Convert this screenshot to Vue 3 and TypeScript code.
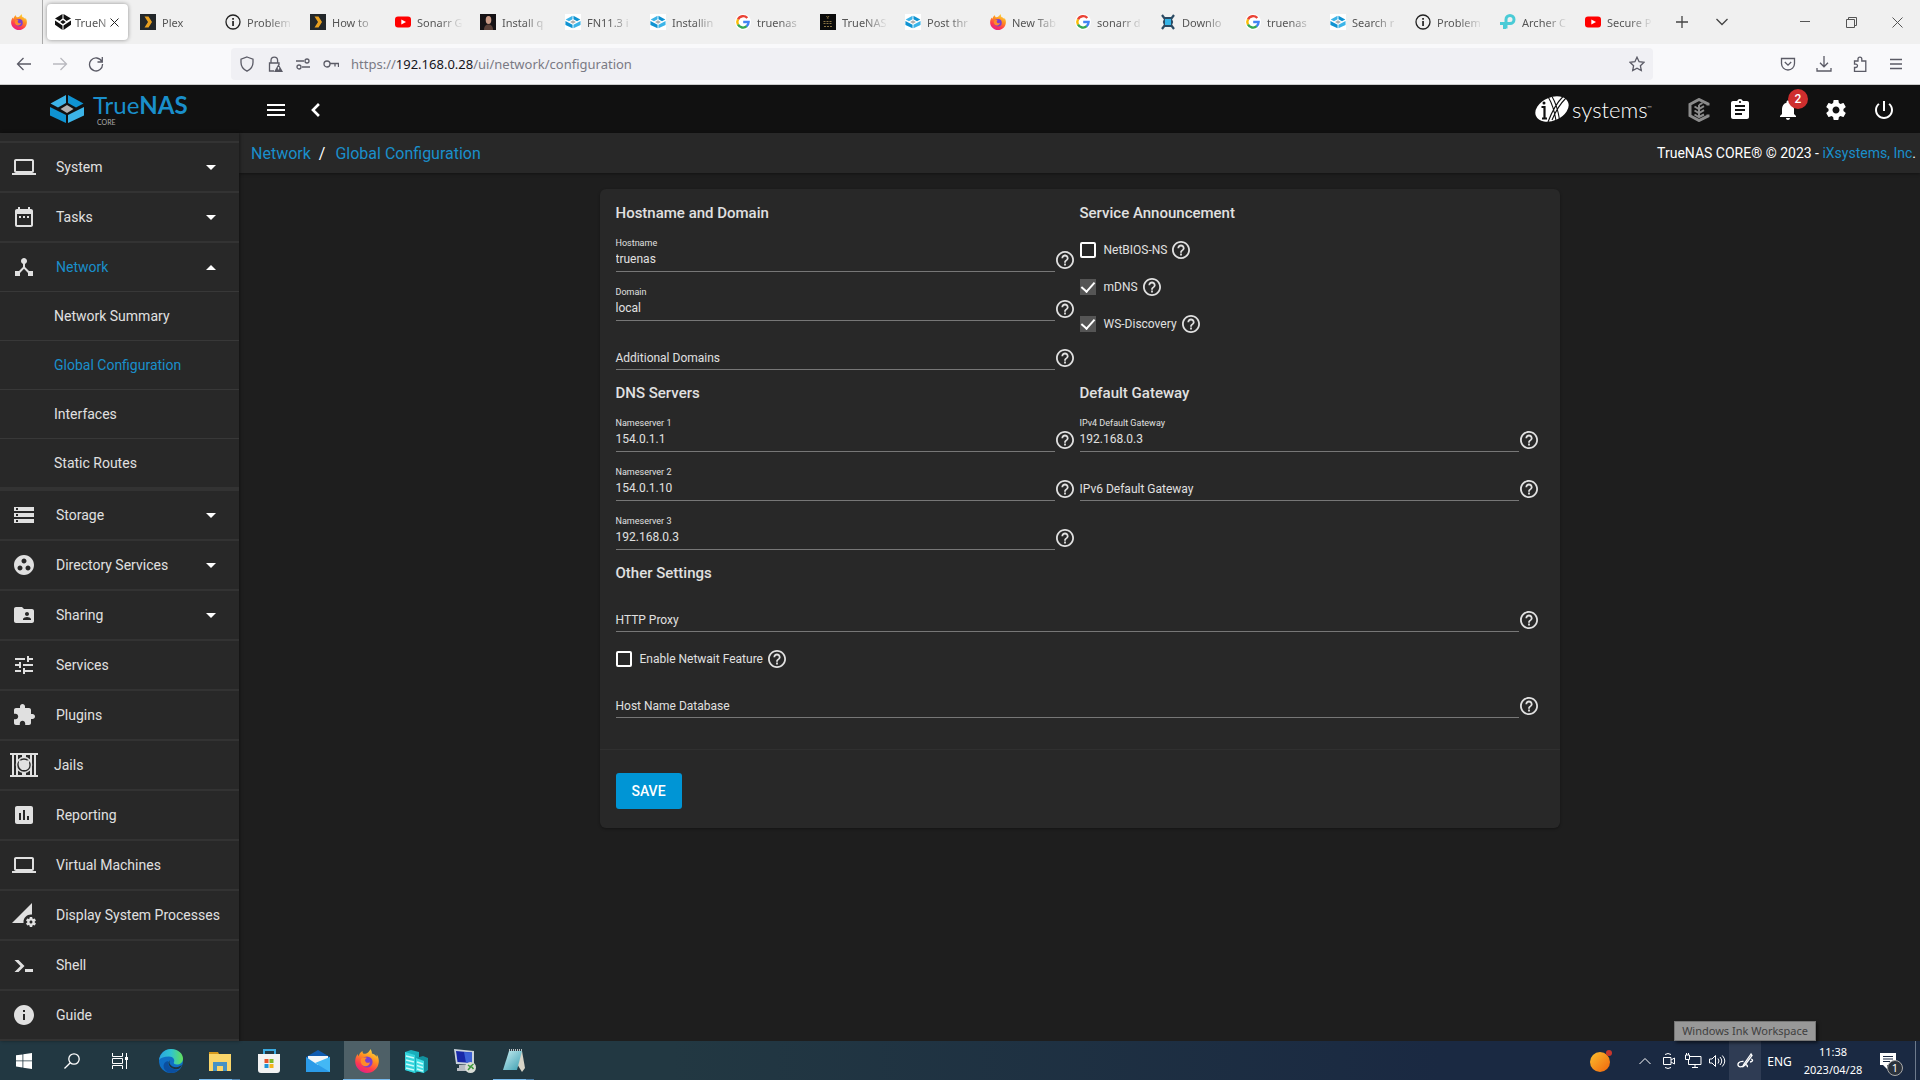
<script setup lang="ts">
import { ref } from 'vue'

interface Tab { title: string; icon: string; active?: boolean }
const tabs: Tab[] = [
  { title: 'TrueN', icon: 'core', active: true },
  { title: 'Plex', icon: 'plex' },
  { title: 'Problem', icon: 'info' },
  { title: 'How to', icon: 'plex' },
  { title: 'Sonarr G', icon: 'youtube' },
  { title: 'Install q', icon: 'person' },
  { title: 'FN11.3 i', icon: 'truenas' },
  { title: 'Installin', icon: 'truenas' },
  { title: 'truenas', icon: 'google' },
  { title: 'TrueNAS', icon: 'dark' },
  { title: 'Post thr', icon: 'truenas' },
  { title: 'New Tab', icon: 'firefox' },
  { title: 'sonarr d', icon: 'google' },
  { title: 'Downlo', icon: 'sonarr' },
  { title: 'truenas', icon: 'google' },
  { title: 'Search r', icon: 'truenas' },
  { title: 'Problem', icon: 'info' },
  { title: 'Archer C', icon: 'tplink' },
  { title: 'Secure P', icon: 'youtube' },
]

const paths: Record<string, string> = {
  laptop: 'M20 18c1.1 0 1.99-.9 1.99-2L22 6c0-1.1-.9-2-2-2H4c-1.1 0-2 .9-2 2v10c0 1.1.9 2 2 2H0v2h24v-2h-4zM4 6h16v10H4V6z',
  calendar: 'M9 11H7v2h2v-2zm4 0h-2v2h2v-2zm4 0h-2v2h2v-2zm2-7h-1V2h-2v2H8V2H6v2H5c-1.11 0-1.99.9-1.99 2L3 20c0 1.1.89 2 2 2h14c1.1 0 2-.9 2-2V6c0-1.1-.9-2-2-2zm0 16H5V9h14v11z',
  hub: 'M17 16l-4-4V8.82C14.16 8.4 15 7.3 15 6c0-1.66-1.34-3-3-3S9 4.34 9 6c0 1.3.84 2.4 2 2.82V12l-4 4H3v5h5v-3.05l4-4.2 4 4.2V21h5v-5h-4z',
  storage: 'M2 20h20v-4H2v4zm2-3h2v2H4v-2zM2 4v4h20V4H2zm4 3H4V5h2v2zm-4 7h20v-4H2v4zm2-3h2v2H4v-2z',
  group: 'M12 2C6.48 2 2 6.48 2 12s4.48 10 10 10 10-4.48 10-10S17.52 2 12 2zM8 17.5c-1.38 0-2.5-1.12-2.5-2.5s1.12-2.5 2.5-2.5 2.5 1.12 2.5 2.5-1.12 2.5-2.5 2.5zM9.5 8c0-1.38 1.12-2.5 2.5-2.5s2.5 1.12 2.5 2.5-1.12 2.5-2.5 2.5S9.5 9.38 9.5 8zm6.5 9.5c-1.38 0-2.5-1.12-2.5-2.5s1.12-2.5 2.5-2.5 2.5 1.12 2.5 2.5-1.12 2.5-2.5 2.5z',
  folder: 'M20 6h-8l-2-2H4c-1.1 0-1.99.9-1.99 2L2 18c0 1.1.9 2 2 2h16c1.1 0 2-.9 2-2V8c0-1.1-.9-2-2-2zm-5 3c1.1 0 2 .9 2 2s-.9 2-2 2-2-.9-2-2 .9-2 2-2zm4 8h-8v-1c0-1.33 2.67-2 4-2s4 .67 4 2v1z',
  tune: 'M3 17v2h6v-2H3zM3 5v2h10V5H3zm10 16v-2h8v-2h-8v-2h-2v6h2zM7 9v2H3v2h4v2h2V9H7zm14 4v-2H11v2h10zm-6-4h2V7h4V5h-4V3h-2v6z',
  plugin: 'M20.5 11H19V7c0-1.1-.9-2-2-2h-4V3.5C13 2.12 11.88 1 10.5 1S8 2.12 8 3.5V5H4c-1.1 0-1.99.9-1.99 2v3.8H3.5c1.49 0 2.7 1.21 2.7 2.7s-1.21 2.7-2.7 2.7H2V20c0 1.1.9 2 2 2h3.8v-1.5c0-1.49 1.21-2.7 2.7-2.7 1.49 0 2.7 1.21 2.7 2.7V22H17c1.1 0 2-.9 2-2v-4h1.5c1.38 0 2.5-1.12 2.5-2.5S21.88 11 20.5 11z',
  report: 'M19 3H5c-1.1 0-2 .9-2 2v14c0 1.1.9 2 2 2h14c1.1 0 2-.9 2-2V5c0-1.1-.9-2-2-2zM9 17H7v-7h2v7zm4 0h-2V7h2v10zm4 0h-2v-4h2v4z',
  process: 'M18.99 11.5c.34 0 .67.03 1 .07L20 0 0 20h11.56c-.04-.33-.07-.66-.07-1 0-4.14 3.36-7.5 7.5-7.5zm3.71 7.99c.02-.16.04-.32.04-.49 0-.17-.01-.33-.04-.49l1.06-.83c.09-.08.12-.21.06-.32l-1-1.73c-.06-.11-.19-.15-.31-.11l-1.24.5c-.26-.2-.54-.37-.85-.49l-.19-1.32c-.01-.12-.12-.21-.24-.21h-2c-.12 0-.23.09-.25.21l-.19 1.32c-.3.13-.59.29-.85.49l-1.24-.5c-.11-.04-.24 0-.31.11l-1 1.73c-.06.11-.04.24.06.32l1.06.83c-.02.16-.03.32-.03.49 0 .17.01.33.03.49l-1.06.83c-.09.08-.12.21-.06.32l1 1.73c.06.11.19.15.31.11l1.24-.5c.26.2.54.37.85.49l.19 1.32c.02.12.12.21.25.21h2c.12 0 .23-.09.25-.21l.19-1.32c.3-.13.59-.29.84-.49l1.25.5c.11.04.24 0 .31-.11l1-1.73c.06-.11.03-.24-.06-.32l-1.07-.83zm-3.71 1.01c-.83 0-1.5-.67-1.5-1.5s.67-1.5 1.5-1.5 1.5.67 1.5 1.5-.67 1.5-1.5 1.5z',
  shell: 'M2.5 7h4l6 6-6 6h-4l6-6zM13 16h8v3h-8z',
  guide: 'M12 2C6.48 2 2 6.48 2 12s4.48 10 10 10 10-4.48 10-10S17.52 2 12 2zm1 15h-2v-6h2v6zm0-8h-2V7h2v2z',
  menu: 'M3 18h18v-2H3v2zm0-5h18v-2H3v2zm0-7v2h18V6H3z',
  back: 'M15.9 17L10.9 12l5-5L14 5.1 7.1 12l6.9 6.9z',
  clipboard: 'M19 3h-4.18C14.4 1.84 13.3 1 12 1c-1.3 0-2.4.84-2.82 2H5c-1.1 0-2 .9-2 2v14c0 1.1.9 2 2 2h14c1.1 0 2-.9 2-2V5c0-1.1-.9-2-2-2zm-7 0c.55 0 1 .45 1 1s-.45 1-1 1-1-.45-1-1 .45-1 1-1zm2 14H7v-2h7v2zm3-4H7v-2h10v2zm0-4H7V7h10v2z',
  bell: 'M12 22c1.1 0 2-.9 2-2h-4c0 1.1.89 2 2 2zm6-6v-5c0-3.07-1.64-5.64-4.5-6.32V4c0-.83-.67-1.5-1.5-1.5s-1.5.67-1.5 1.5v.68C7.63 5.36 6 7.92 6 11v5l-2 2v1h16v-1l-2-2z',
  gear: 'M19.43 12.98c.04-.32.07-.64.07-.98s-.03-.66-.07-.98l2.11-1.65c.19-.15.24-.42.12-.64l-2-3.46c-.12-.22-.39-.3-.61-.22l-2.49 1c-.52-.4-1.08-.73-1.69-.98l-.38-2.65C14.46 2.18 14.25 2 14 2h-4c-.25 0-.46.18-.49.42l-.38 2.65c-.61.25-1.17.59-1.69.98l-2.49-1c-.23-.09-.49 0-.61.22l-2 3.46c-.13.22-.07.49.12.64l2.11 1.65c-.04.32-.07.65-.07.98s.03.66.07.98l-2.11 1.65c-.19.15-.24.42-.12.64l2 3.46c.12.22.39.3.61.22l2.49-1c.52.4 1.08.73 1.69.98l.38 2.65c.03.24.24.42.49.42h4c.25 0 .46-.18.49-.42l.38-2.65c.61-.25 1.17-.59 1.69-.98l2.49 1c.23.09.49 0 .61-.22l2-3.46c.12-.22.07-.49-.12-.64l-2.11-1.65zM12 15.5c-1.93 0-3.5-1.57-3.5-3.5s1.57-3.5 3.5-3.5 3.5 1.57 3.5 3.5-1.57 3.5-3.5 3.5z',
  power: 'M13 3h-2v10h2V3zm4.83 2.17l-1.42 1.42C17.99 7.86 19 9.81 19 12c0 3.87-3.13 7-7 7s-7-3.13-7-7c0-2.19 1.01-4.14 2.58-5.42L6.17 5.17C4.23 6.82 3 9.26 3 12c0 4.97 4.03 9 9 9s9-4.03 9-9c0-2.74-1.23-5.18-3.17-6.83z',
  help: 'M11 18h2v-2h-2v2zm1-16C6.48 2 2 6.48 2 12s4.48 10 10 10 10-4.48 10-10S17.52 2 12 2zm0 18c-4.41 0-8-3.59-8-8s3.59-8 8-8 8 3.59 8 8-3.59 8-8 8zm0-14c-2.21 0-4 1.79-4 4h2c0-1.1.9-2 2-2s2 .9 2 2c0 2-3 1.75-3 5h2c0-2.25 3-2.5 3-5 0-2.21-1.79-4-4-4z',
}

interface NavItem { label: string; icon: string; expandable?: boolean; open?: boolean; children?: string[] }
const nav: NavItem[] = [
  { label: 'System', icon: 'laptop', expandable: true },
  { label: 'Tasks', icon: 'calendar', expandable: true },
  { label: 'Network', icon: 'hub', expandable: true, open: true, children: ['Network Summary', 'Global Configuration', 'Interfaces', 'Static Routes'] },
  { label: 'Storage', icon: 'storage', expandable: true },
  { label: 'Directory Services', icon: 'group', expandable: true },
  { label: 'Sharing', icon: 'folder', expandable: true },
  { label: 'Services', icon: 'tune' },
  { label: 'Plugins', icon: 'plugin' },
  { label: 'Jails', icon: 'jail' },
  { label: 'Reporting', icon: 'report' },
  { label: 'Virtual Machines', icon: 'laptop' },
  { label: 'Display System Processes', icon: 'process' },
  { label: 'Shell', icon: 'shell' },
  { label: 'Guide', icon: 'guide' },
]
const activeChild = 'Global Configuration'

interface Field { id: string; label: string; value: string }
interface Check { id: string; label: string; checked: boolean }
interface Section { title: string; wide?: boolean; fields: Field[]; checks: Check[]; after?: Field[] }
const sections = ref<Section[]>([
  { title: 'Hostname and Domain', checks: [], fields: [
    { id: 'hostname', label: 'Hostname', value: 'truenas' },
    { id: 'domain', label: 'Domain', value: 'local' },
    { id: 'domains', label: 'Additional Domains', value: '' },
  ] },
  { title: 'Service Announcement', fields: [], checks: [
    { id: 'netbios', label: 'NetBIOS-NS', checked: false },
    { id: 'mdns', label: 'mDNS', checked: true },
    { id: 'wsd', label: 'WS-Discovery', checked: true },
  ] },
  { title: 'DNS Servers', checks: [], fields: [
    { id: 'ns1', label: 'Nameserver 1', value: '154.0.1.1' },
    { id: 'ns2', label: 'Nameserver 2', value: '154.0.1.10' },
    { id: 'ns3', label: 'Nameserver 3', value: '192.168.0.3' },
  ] },
  { title: 'Default Gateway', checks: [], fields: [
    { id: 'ipv4', label: 'IPv4 Default Gateway', value: '192.168.0.3' },
    { id: 'ipv6', label: 'IPv6 Default Gateway', value: '' },
  ] },
  { title: 'Other Settings', wide: true,
    fields: [{ id: 'proxy', label: 'HTTP Proxy', value: '' }],
    checks: [{ id: 'netwait', label: 'Enable Netwait Feature', checked: false }],
    after: [{ id: 'hosts', label: 'Host Name Database', value: '' }] },
])
</script>

<template>
  <div class="screen">
    <!-- shared drawings -->
    <svg class="defs" aria-hidden="true">
      <defs>
        <linearGradient id="gFox" x1="0.8" y1="0" x2="0.3" y2="1">
          <stop offset="0" stop-color="#ffe040" /><stop offset=".4" stop-color="#ff9020" /><stop offset=".75" stop-color="#ff3850" /><stop offset="1" stop-color="#e0218a" />
        </linearGradient>
        <linearGradient id="gEdge" x1="0" y1="0" x2="1" y2="0">
          <stop offset="0" stop-color="#2aa5e0" /><stop offset=".5" stop-color="#30c4d0" /><stop offset="1" stop-color="#62e05a" />
        </linearGradient>
        <linearGradient id="gSun" x1="0" y1="0" x2="1" y2="1">
          <stop offset="0" stop-color="#fcc02e" /><stop offset="1" stop-color="#f0640c" />
        </linearGradient>
        <linearGradient id="gNote" x1="0" y1="0" x2="1" y2="1">
          <stop offset="0" stop-color="#c8eef2" /><stop offset="1" stop-color="#3a9db0" />
        </linearGradient>
      </defs>
      <symbol id="s-firefox" viewBox="0 0 24 24">
        <path fill="url(#gFox)" d="M15.500 0c1 1.500 1.500 3 1.400 4.500 2.300.5 4 2 4.700 3.300.3-.9.200-1.700 0-2.500C23.200 7.500 24 10.200 23.800 13 23.300 19.300 18.200 24 12 24S.2 18.800.2 12.600c0-3 .9-5.700 2.600-7.500.1 1 .4 1.600.9 2.200C4 5 5.500 3 7.500 2c-.1 1 .2 2 1 2.700 2 .200 3.200-.2 4.500-1.300C14 2.500 15 1.300 15.500 0z" />
        <circle cx="12" cy="13" r="5.600" fill="#7a3fd0" />
        <path d="M6 10c1.500-1.500 4-1.800 6-1-1.500.6-2.200 1.500-1.800 3 .6 2 3.300 2.300 4.800 1.200-.4 3-3 4.600-5.500 4C6.500 16.500 5 13 6 10z" fill="#ff8a2a" />
      </symbol>
      <symbol id="s-truenas" viewBox="0 0 36 28">
        <path fill="#0f93d2" d="M1 12v8.500L17 28v-8z" />
        <path fill="#3cb4e8" d="M17 0v8L9 12.500 1.500 8.500zM35 12v8.500L19 28v-8z" />
        <path fill="#0f93d2" d="M19 0l15.500 8.500L27 12.500 19 8z" />
        <path fill="#b0b0b0" d="M18 10l6.500 4-6.500 4-6.500-4z" />
      </symbol>
      <symbol id="s-core" viewBox="0 0 16 16">
        <path d="M7.500 0v4.500L4.500 7 0 4.500zM8.500 0v4.500l3 2.500L16 4.500zM0 6.500l7.500 5V16L0 10.800zM16 6.500l-7.500 5V16l7.500-5.200zM8 6l2.800 2L8 10 5.200 8z" fill="#111" />
      </symbol>
      <symbol id="s-plex" viewBox="0 0 16 16"><path fill="#23272a" d="M0 0h16v16H0z" /><path fill="#e8a020" d="M4.500 2.500h4L12 8l-3.500 5.500h-4L8 8z" /></symbol>
      <symbol id="s-info" viewBox="0 0 16 16"><circle cx="8" cy="8" r="7" fill="none" stroke="#222" stroke-width="1.300" /><path fill="#222" d="M7.200 7h1.700v5H7.200zM7.200 4h1.700v1.700H7.200z" /></symbol>
      <symbol id="s-youtube" viewBox="0 0 16 16"><rect y="2.500" width="16" height="11" rx="3" fill="#f00" /><path fill="#fff" d="M6.300 5.500L11 8l-4.700 2.500z" /></symbol>
      <symbol id="s-person" viewBox="0 0 16 16"><path fill="#151215" d="M0 0h16v16H0z" /><ellipse cx="8.500" cy="6" rx="2.800" ry="4" fill="#c99a86" /><path fill="#5a4038" d="M4 16c0-4 2-5.500 4.500-5.500S13 12 13 16z" /></symbol>
      <symbol id="s-google" viewBox="0 0 16 16">
        <circle cx="8" cy="8" r="8" fill="#fff" />
        <g fill="none" stroke-width="2.400"><path d="M12.300 4A5.600 5.600 0 0 0 3 5.500" stroke="#ea4335" /><path d="M3 5.300a5.600 5.600 0 0 0 0 5.400" stroke="#fbbc05" /><path d="M3 10.500a5.600 5.600 0 0 0 8.800 1.700" stroke="#34a853" /><path d="M11.500 12.300A5.600 5.600 0 0 0 13.600 8H8.200" stroke="#4285f4" /></g>
      </symbol>
      <symbol id="s-dark" viewBox="0 0 16 16"><path fill="#0b0b0b" d="M0 0h16v16H0z" /><path stroke="#8a7444" fill="none" d="M6.500 2l2 3M9 2L7 5M3.500 7.500h9M3.500 9.500h9M4 12.500h8" stroke-dasharray="2 1" /></symbol>
      <symbol id="s-sonarr" viewBox="0 0 16 16"><path fill="none" stroke="#2b4a63" stroke-width="2.200" d="M2 1l3 4-1 3 1 3-3 4M14 1l-3 4 1 3-1 3 3 4M5 4h6M5 12h6" /><rect x="5" y="5" width="6" height="6" fill="#35b5e8" /></symbol>
      <symbol id="s-tplink" viewBox="0 0 16 16"><path fill="none" stroke="#4acbd6" stroke-width="3" d="M0 9.500h4.500V15M6 9.500h4a4 4 0 1 0-4-4v9" /></symbol>
    </svg>

    <header class="browser">
      <div class="tabstrip">
        <button class="pinned" aria-label="Firefox View"><svg width="16" height="16"><use href="#s-firefox" /></svg></button>
        <nav class="tabs">
          <button v-for="(t, i) in tabs" :key="i" class="tab" :class="{ active: t.active }">
            <svg width="16" height="16" :class="{ white: t.icon === 'truenas' }"><use :href="'#s-' + t.icon" /></svg>
            <span class="tab-title">{{ t.title }}</span>
            <svg v-if="t.active" class="close" width="9" height="9" viewBox="0 0 9 9"><path d="M.5.5l8 8M8.500.5l-8 8" stroke="#222" /></svg>
          </button>
        </nav>
        <button class="strip-btn" aria-label="New tab"><svg width="12" height="12" viewBox="0 0 12 12"><path d="M6 0v12M0 6h12" stroke="#444" stroke-width="1.300" /></svg></button>
        <button class="strip-btn" aria-label="List all tabs"><svg width="12" height="8" viewBox="0 0 12 8"><path d="M.5 1L6 6.500 11.500 1" fill="none" stroke="#444" stroke-width="1.300" /></svg></button>
        <div class="win">
          <button aria-label="Minimize"><svg width="10" height="10"><path d="M0 4.500h10" stroke="#555" /></svg></button>
          <button aria-label="Restore"><svg width="11" height="11" fill="none" stroke="#555"><path d="M.5 2.500h8v8h-8zM2.500 2.500v-2h8v8h-2" /></svg></button>
          <button aria-label="Close"><svg width="11" height="11"><path d="M.5.5l10 10M10.500.5l-10 10" stroke="#555" /></svg></button>
        </div>
      </div>
      <div class="toolbar">
        <div class="nav-btns">
          <button aria-label="Back"><svg width="16" height="16" viewBox="0 0 16 16"><path d="M15 8H1.500M7.500 2l-6 6 6 6" /></svg></button>
          <button aria-label="Forward" class="dim"><svg width="16" height="16" viewBox="0 0 16 16"><path d="M1 8h13.500M8.500 2l6 6-6 6" /></svg></button>
          <button aria-label="Reload"><svg width="16" height="16" viewBox="0 0 16 16"><path d="M13.800 5.500A6.500 6.500 0 1 0 14.500 8M14.300 1v5H9.500" /></svg></button>
        </div>
        <div class="urlbar">
          <svg width="16" height="16" viewBox="0 0 16 16"><path d="M8 1l6 2.200v3.300c0 4-2.500 7-6 8.700-3.500-1.700-6-4.700-6-8.700V3.200z" /></svg>
          <svg width="16" height="16" viewBox="0 0 16 16"><path d="M4 7V4.500a3.300 3.300 0 0 1 6.600 0V7M7 15H2.500V7h9.500v2" /><path d="M11.500 8l4.500 8H7z" fill="#5b5b66" stroke="none" /><path d="M11.500 11v2.500" stroke="#f0f0f4" /></svg>
          <svg width="16" height="16" viewBox="0 0 16 16"><path d="M1 5h8M7 11h8" /><circle cx="12" cy="5" r="2" /><circle cx="4" cy="11" r="2" /></svg>
          <svg width="16" height="16" viewBox="0 0 16 16"><circle cx="4" cy="8" r="3" /><path d="M7 7.500h8.500V11M12 7.500v3" /></svg>
          <div class="address"><span>https://</span><b>192.168.0.28</b><span>/ui/network/configuration</span></div>
          <svg width="16" height="16" viewBox="0 0 16 16"><path d="M8 1.200l2.100 4.500 4.900.6-3.600 3.400.9 4.900L8 12.200l-4.300 2.400.9-4.900L1 6.300l4.900-.6z" /></svg>
        </div>
        <div class="tools">
          <button aria-label="Pocket"><svg width="16" height="16" viewBox="0 0 16 16"><path d="M1.500 2.500h13v5a6.500 6.500 0 0 1-13 0zM4.800 6L8 9.200 11.200 6" /></svg></button>
          <button aria-label="Downloads"><svg width="16" height="16" viewBox="0 0 16 16"><path d="M8 0v10.500M4 6.800l4 4 4-4M1 12v3h14v-3" /></svg></button>
          <button aria-label="Extensions"><svg width="16" height="16" viewBox="0 0 16 16"><path d="M2.500 15.500v-4h1.300a1.700 1.700 0 0 0 0-3.400H2.500V5H6V3a1.900 1.900 0 0 1 3.800 0v2h4v10.500z" /></svg></button>
          <button aria-label="Menu"><svg width="16" height="16" viewBox="0 0 16 16"><path d="M2 3.500h12M2 8h12M2 12.500h12" /></svg></button>
        </div>
      </div>
    </header>

    <div class="app">
      <header class="topbar">
        <a class="brand" href="#">
          <svg width="36" height="28"><use href="#s-truenas" /></svg>
          <span class="word"><span class="name">True<b>NAS</b></span><small>CORE</small></span>
        </a>
        <button class="tb menu" aria-label="Toggle menu"><svg width="24" height="24" viewBox="0 0 24 24"><path :d="paths.menu" /></svg></button>
        <button class="tb chev" aria-label="Collapse menu"><svg width="16" height="16" viewBox="4 4 16 16"><path :d="paths.back" /></svg></button>
        <a class="ix" href="#" aria-label="iXsystems">
          <svg width="36" height="28" viewBox="0 0 36 28">
            <ellipse cx="18" cy="14" rx="17.500" ry="11.500" transform="rotate(-24 18 14)" fill="#fff" />
            <path d="M14.500 2.500c3 5 6 14 7.500 23M18 1.500c3 5 6 14 7.500 23M29.500 1c-6 6-11 14-15.500 26M32 3c-6 6-10 12-14 22" fill="none" stroke="#111" stroke-width="1.100" />
            <path d="M7.500 12h3v11M8 23.500h5" fill="none" stroke="#111" stroke-width="2.200" /><circle cx="10" cy="8" r="1.500" fill="#111" />
          </svg>
          <span>systems<sup>™</sup></span>
        </a>
        <div class="actions">
          <button class="tb" aria-label="TrueCommand">
            <svg width="22" height="24" viewBox="0 0 22 24" fill="none" stroke="#8b8b8b">
              <path d="M20 7.500V6L11 1.500 2 6.300v11.400l9 4.800 9-4.500v-1.500" stroke-width="3" /><path d="M11 7v13M11 7l3.500-2M6.500 8.500L11 11l5-2.800M6.500 12.500L11 15l5-2.800M6.500 16.500L11 19l5-2.500" stroke-width="2" />
            </svg>
          </button>
          <button class="tb" aria-label="Tasks"><svg width="24" height="24" viewBox="0 0 24 24"><path :d="paths.clipboard" /></svg></button>
          <button class="tb" aria-label="Alerts"><svg width="24" height="24" viewBox="0 0 24 24"><path :d="paths.bell" /></svg><span class="badge">2</span></button>
          <button class="tb" aria-label="Settings"><svg width="24" height="24" viewBox="0 0 24 24"><path :d="paths.gear" /></svg></button>
          <button class="tb" aria-label="Power"><svg width="24" height="24" viewBox="0 0 24 24"><path :d="paths.power" /></svg></button>
        </div>
      </header>

      <div class="body">
        <nav class="sidebar">
          <div v-for="n in nav" :key="n.label" class="group" :class="{ open: n.open }">
            <a class="item" :class="{ on: n.open }" href="#">
              <svg v-if="n.icon === 'jail'" class="jail" width="28" height="24" viewBox="0 0 28 24">
                <path d="M0 0h28v2H0zM0 22h28v2H0zM2 2h2v20H2zM6 2h2v20H6zM20 2h2v20h-2zM24 2h2v20h-2zM12 2h4v3h-4zM12 19h4v3h-4z" fill="#e0e0e0" />
                <circle cx="14" cy="12" r="7.500" fill="#282828" stroke="#e0e0e0" stroke-width="1.500" /><path d="M9 9l-1-2 3 .5c2-1 4-1 6 0L20 7l-1 3c1 3 0 6-3 7h-4c-3-2-4-5-3-8z" fill="#e0e0e0" />
              </svg>
              <svg v-else width="24" height="24" viewBox="0 0 24 24"><path :d="paths[n.icon]" /></svg>
              <span>{{ n.label }}</span>
              <i v-if="n.expandable" class="arrow" :class="{ up: n.open }"></i>
            </a>
            <a v-for="c in n.children" :key="c" class="sub" :class="{ on: c === activeChild }" href="#">{{ c }}</a>
          </div>
        </nav>

        <div class="content">
          <div class="crumbs">
            <a href="#">Network</a><span class="sep">/</span><a href="#">Global Configuration</a>
            <p>TrueNAS CORE® © 2023 - <a href="#">iXsystems, Inc</a>.</p>
          </div>
          <main>
            <form class="card" @submit.prevent>
              <div class="grid">
                <section v-for="s in sections" :key="s.title" :class="{ wide: s.wide }">
                  <h2>{{ s.title }}</h2>
                  <div v-for="f in s.fields" :key="f.id" class="row">
                    <div class="field" :class="{ empty: !f.value }">
                      <label :for="f.id">{{ f.label }}</label><input :id="f.id" v-model="f.value" type="text" />
                    </div>
                    <svg class="help" viewBox="2 2 20 20"><path :d="paths.help" /></svg>
                  </div>
                  <div v-for="c in s.checks" :key="c.id" class="check">
                    <input :id="c.id" v-model="c.checked" type="checkbox" /><label :for="c.id">{{ c.label }}</label>
                    <svg class="help" viewBox="2 2 20 20"><path :d="paths.help" /></svg>
                  </div>
                  <div v-for="f in s.after" :key="f.id" class="row">
                    <div class="field" :class="{ empty: !f.value }">
                      <label :for="f.id">{{ f.label }}</label><input :id="f.id" v-model="f.value" type="text" />
                    </div>
                    <svg class="help" viewBox="2 2 20 20"><path :d="paths.help" /></svg>
                  </div>
                </section>
              </div>
              <footer><button type="submit" class="save">SAVE</button></footer>
            </form>
          </main>
        </div>
      </div>
    </div>

    <footer class="taskbar">
      <div class="sysgroup">
        <button aria-label="Start"><svg width="16" height="16" viewBox="0 0 16 16" fill="#fff"><path d="M0 2.300l6.500-.9v6.100H0zM7.300 1.300L16 0v7.500H7.300zM0 8.300h6.500v6.200L0 13.600zM7.300 8.300H16V16l-8.700-1.300z" /></svg></button>
        <button aria-label="Search"><svg width="16" height="16" viewBox="0 0 16 16" fill="none" stroke="#fff" stroke-width="1.300"><circle cx="10" cy="6" r="5.200" /><path d="M6.300 9.700L.5 15.500" /></svg></button>
        <button aria-label="Task view"><svg width="17" height="16" viewBox="0 0 17 16" fill="none" stroke="#fff"><path d="M.5 0v3.500h10V0M.5 16v-3.500h10V16M.5 5.500h10v5H.5zM14.500 0v16" /><path d="M13 4h3v3h-3z" fill="#fff" stroke="none" /></svg></button>
      </div>

      <button class="task" aria-label="Edge"><svg width="24" height="24" viewBox="0 0 24 24">
        <circle cx="12" cy="12" r="12" fill="#0f6fc5" /><path d="M0 11C1 4.500 6 0 12 0c7 0 12 4.500 12 9.500 0 4-3 6-6 6-2.500 0-4-1-3-2.500 1-2-.5-5.500-5-5.500C5 7.500 1.500 9 0 11z" fill="url(#gEdge)" /><path d="M9 12c-1 5 4 9.500 11 8.500-3 3.500-8 4-11 3-4-1.500-6-7-3-10 1-1 2-1.500 3-1.500z" fill="#0b4fa0" /><path d="M11 11c-2 3 1 8 8 7l4-2c-1 2-2 3.500-4 4-6 1-10-3-9.500-7z" fill="#20353f" />
      </svg></button>
      <button class="task multi" aria-label="File Explorer"><svg width="24" height="24" viewBox="0 0 24 24">
        <path d="M1 3h9l1.500 3H1z" fill="#d69a1c" /><path d="M1 5h22v17H1z" fill="#fad66a" /><path d="M5 22v-9h14v9h-4v-5H9v5z" fill="#4592c4" />
      </svg></button>
      <button class="task" aria-label="Microsoft Store"><svg width="24" height="24" viewBox="0 0 24 24">
        <path d="M7 6V1h11v5" fill="none" stroke="#3aa9e0" stroke-width="2" /><path d="M1 5h22v16q0 3-3 3H4q-3 0-3-3z" fill="#f2f2f2" /><path d="M7.500 10h4v4h-4z" fill="#e8532b" /><path d="M12.500 10h4v4h-4z" fill="#7db928" /><path d="M7.500 15h4v4h-4z" fill="#1e94d8" /><path d="M12.500 15h4v4h-4z" fill="#f3b51c" />
      </svg></button>
      <button class="task" aria-label="Mail"><svg width="24" height="24" viewBox="0 0 24 24">
        <path d="M0 8l12-7 12 7v3H0z" fill="#0f5bb0" /><path d="M2 7h20v9H2z" fill="#f4f6f8" /><path d="M0 8l12 8 12-8v15H0z" fill="#2b9be8" /><path d="M24 8v15L9 14z" fill="#43b8f5" />
      </svg></button>
      <button class="task current" aria-label="Firefox"><svg width="24" height="24"><use href="#s-firefox" /></svg></button>
      <button class="task" aria-label="Server Manager"><svg width="24" height="24" viewBox="0 0 24 24">
        <path d="M1 3l6-2 8 2v19l-4 2-10-3z" fill="#19aebb" /><path d="M1 3l10 3v18L1 21z" fill="#35d5dd" /><path d="M12 9l7-2 5 2v12l-4 3-8-2z" fill="#12919f" /><path d="M12 9l8 3v12l-8-2z" fill="#3fdfe4" /><path d="M2 7l8 2M2 11l8 2M2 15l8 2M2 19l8 2M13 13l6 2M13 16.500l6 2M13 20l6 2" stroke="#c9fbfb" stroke-width="1.500" />
      </svg></button>
      <button class="task" aria-label="Remote Desktop"><svg width="24" height="24" viewBox="0 0 24 24">
        <path d="M1 0l20 2v14L3 15z" fill="#c9d2dc" /><path d="M3 2l16 1.500V14L4.500 13z" fill="#1828a8" /><path d="M11 3l8 .5V14l-6-.5z" fill="#3c62d8" /><path d="M6 16h7v3H6zM4 19h11v3H4z" fill="#b7bcc2" /><circle cx="17.500" cy="18.500" r="5.500" fill="#d9dcd6" /><path d="M15 16l2.500 2-2.500 3M20.500 15l-2.500 2 2.500 3" fill="none" stroke="#3c9a3c" stroke-width="1.500" />
      </svg></button>
      <button class="task multi" aria-label="Notepad"><svg width="24" height="24" viewBox="0 0 24 24">
        <path d="M7 2h13l3 17-3 4z" fill="#d8d5c8" /><path d="M7 2h13l-5 19H1z" fill="url(#gNote)" /><path d="M7 1h13" stroke="#eee" stroke-width="1.500" stroke-dasharray="1 1" />
      </svg></button>

      <div class="tray">
        <button class="weather" aria-label="Weather"><svg width="24" height="24" viewBox="0 0 24 24"><circle cx="11" cy="13" r="10" fill="url(#gSun)" /><circle cx="20" cy="4" r="3" fill="#c8362c" /></svg></button>
        <button class="t24" aria-label="Show hidden icons"><svg width="12" height="8" viewBox="0 0 12 8"><path d="M.5 7L6 1.500 11.500 7" /></svg></button>
        <button class="t24" aria-label="Meet now"><svg width="14" height="16" viewBox="0 0 14 16"><path d="M3 1.500q3-2 6 0M3 14.500q3 2 6 0M1.500 4.500h7.500v7H1.500zM9 7l3.500-2v6L9 9" /></svg></button>
        <button class="t24" aria-label="Network"><svg width="17" height="16" viewBox="0 0 17 16"><path d="M5 3.500h11v8H3.500V7M7 14.500h6M10 11.500v3M.5 2v4.500h4V2zM1.500 0v2M3.500 0v2" /></svg></button>
        <button class="t24" aria-label="Volume"><svg width="17" height="14" viewBox="0 0 17 14"><path d="M.5 5h2.500L6.500 1.500v11L3 9H.5zM9 4.500q2 2.500 0 5M11 3q3.500 4 0 8M13.300 1.500q5 5.500 0 11" /></svg></button>
        <div class="ink">
          <button aria-label="Windows Ink Workspace" aria-describedby="ink-tip"><svg width="17" height="18" viewBox="0 0 17 18"><path d="M14 2L7 12l-1.500 3L8 13l7-9.500zM14 7c3 1 1 3-1 3M6.500 9.500C2 9 0 12 1.500 14c2 2 5 0 6.500-1s3 1 2 2" stroke-width="1.300" /></svg></button>
          <span id="ink-tip" role="tooltip" class="tip">Windows Ink Workspace</span>
        </div>
        <button class="lang">ENG</button>
        <button class="clock"><span>11:38</span><span>2023/04/28</span></button>
        <button class="notif" aria-label="Notifications"><svg width="16" height="16" viewBox="0 0 16 16"><path d="M0 0h16v12H7v4l-4-4H0z" fill="#fff" stroke="none" /><path d="M3 3.500h10M3 6h10M3 8.500h7" stroke="#1a2942" /></svg><span class="count">1</span></button>
      </div>
    </footer>
  </div>
</template>

<style>
body { margin: 0; background: #1e1e1e; }
</style>

<style scoped>
* { box-sizing: border-box; }
button { border: 0; padding: 0; background: none; font: inherit; color: inherit; display: flex; align-items: center; justify-content: center; }
a { text-decoration: none; color: inherit; }
svg { flex: none; display: block; }
.defs { width: 0; height: 0; position: absolute; }
.screen { min-height: 100vh; display: flex; flex-direction: column; font-family: "Noto Sans", "Open Sans", sans-serif; }

.browser { color: #5b5b66; border-bottom: 1px solid #ccc; }
.tabstrip { display: flex; align-items: center; height: 44px; background: #f0f0f0; }
.pinned { width: 43px; height: 44px; padding-right: 4px; border-right: 1px solid #aaa; }
.tabs { display: flex; padding: 0 2px; min-width: 0; }
.tab { width: 85px; height: 36px; padding: 0 0 0 10px; gap: 6px; justify-content: flex-start; min-width: 0; font-size: 11px; color: #555; }
.tab.active { margin: 0 2px; width: 81px; padding: 0 11px 0 8px; background: #fff; border-radius: 4px; box-shadow: 0 0 4px #0006; gap: 4px; }
.tab-title { white-space: nowrap; mask-image: linear-gradient(90deg, #000 22px, transparent 46px); }
.tab .white { background: #fff; padding: 1px 0; }
.close { margin-left: auto; }
.strip-btn { width: 40px; height: 36px; }
.win { display: flex; margin-left: auto; }
.win button { width: 46px; height: 44px; }
.toolbar { display: flex; align-items: center; height: 40px; background: #f9f9fb; }
.toolbar svg { fill: none; stroke: #5b5b66; stroke-width: 1.3; }
.nav-btns { display: flex; width: 231px; padding-left: 6px; }
.nav-btns button { width: 36px; height: 32px; }
.dim { opacity: .4; }
.urlbar { flex: 1; max-width: 1422px; height: 32px; display: flex; align-items: center; gap: 12px; padding: 0 8px; background: #f0f0f4; border-radius: 4px; }
.address { flex: 1; font-size: 13px; color: #7a7a84; white-space: nowrap; }
.address b { font-weight: 400; color: #15141a; }
.tools { display: flex; margin-left: auto; padding-right: 6px; }
.tools button { width: 36px; height: 32px; }

.app { flex: 1; display: flex; flex-direction: column; font-family: Roboto, sans-serif; color: #e0e0e0; background: #1e1e1e; }
.topbar { display: flex; align-items: center; height: 48px; background: #111; color: #fff; }
.brand { display: flex; align-items: center; width: 240px; padding-left: 49px; gap: 8px; color: #1a8fcb; }
.word { display: flex; flex-direction: column; font-family: Lato, sans-serif; }
.name { font-size: 24px; line-height: 26px; }
.name b { font-weight: 700; }
.word small { font-size: 7px; line-height: 8px; padding-left: 4px; color: #aaa; }
.tb { position: relative; width: 48px; height: 48px; padding-top: 2px; fill: #fff; }
.menu { margin-left: 12px; }
.chev { width: 32px; }
.ix { display: flex; align-items: center; gap: 2px; margin-left: auto; font-family: Lato, sans-serif; font-weight: 300; font-size: 22px; }
.ix sup { font-size: 6px; }
.actions { display: flex; margin-left: 30px; padding-right: 12px; }
.actions .tb:first-child { width: 34px; }
.badge { position: absolute; top: 4px; right: 4px; width: 20px; height: 20px; border-radius: 50%; background: #ce2e2e; font-size: 12px; line-height: 20px; font-weight: 500; text-align: center; }

.body { flex: 1; display: flex; }
.sidebar { width: 239px; flex: none; padding-top: 8px; background: #282828; font-size: 14px; position: relative; box-shadow: 1px 0 3px #0006; }
.group { border-bottom: 2px solid #333; }
.group:first-child { border-top: 2px solid #333; }
.group.open { border-bottom-width: 4px; }
.item { display: flex; align-items: center; height: 48px; padding: 0 0 0 12px; white-space: nowrap; }
.item svg { fill: #e0e0e0; margin-right: 20px; }
.item .jail { margin-left: -2px; margin-right: 16px; }
.item.on span, .sub.on { color: #1a8fcb; }
.arrow { margin: 0 23px 0 auto; border: 5px solid transparent; border-top-color: #fff; border-bottom: 0; }
.arrow.up { border-top: 0; border-bottom: 5px solid #fff; }
.sub { display: flex; align-items: center; height: 49px; padding-left: 54px; border-top: 1px solid #383838; }
.content { flex: 1; min-width: 0; }
.crumbs { display: flex; align-items: center; height: 40px; padding: 0 4px 0 12px; background: #282828; font-size: 16px; box-shadow: 0 1px 3px #0006; }
.crumbs a { color: #1a8fcb; }
.sep { margin: 0 10px 0 8px; color: #fff; }
.crumbs p { margin: 0 0 0 auto; font-size: 14px; color: #fff; }
main { padding: 16px; }
.card { max-width: 960px; margin: 0 auto; background: #282828; border-radius: 6px; box-shadow: 0 1px 3px #0005; }
.grid { display: grid; grid-template-columns: 1fr 1fr; padding: 1px 16px 31px; border-bottom: 1px solid #303030; }
.wide { grid-column: 1 / -1; }
h2 { margin: 0; padding-top: 13px; font-size: 15px; line-height: 20px; font-weight: 500; }
.row { display: flex; align-items: flex-end; gap: 1px; padding-right: 6px; }
.row .help { margin-bottom: 3px; }
.help { width: 18px; height: 18px; fill: #e0e0e0; }
.field { flex: 1; display: flex; flex-direction: column; justify-content: flex-end; height: 49px; gap: 2px; padding-bottom: 4px; border-bottom: 1px solid #777; }
.field label { font-size: 9px; line-height: 12px; }
.field.empty { flex-direction: row; align-items: flex-end; justify-content: flex-start; padding-bottom: 3px; }
.field.empty label { font-size: 12px; line-height: 16px; }
.field input { flex: none; height: 16px; padding: 0; border: 0; outline: 0; background: none; color: inherit; font: 12px/16px Roboto, sans-serif; }
.field.empty input { flex: 1; min-width: 0; }
.check { display: flex; align-items: center; height: 37px; padding-top: 16px; font-size: 12px; }
.check label { margin: 0 5px 0 8px; }
.check input { appearance: none; width: 16px; height: 16px; margin: 0; border: 2px solid #fff; border-radius: 2px; }
.check input:checked { border: 0; border-radius: 0; background: #555; display: grid; place-items: center; }
.check input:checked::after { content: ""; width: 6px; height: 11px; border: solid #fff; border-width: 0 2px 2px 0; transform: rotate(42deg); margin-bottom: 3px; }
.card footer { padding: 23px 16px 19px; }
.save { height: 36px; width: 66px; border-radius: 3px; background: #0095d5; color: #fff; font-size: 14px; font-weight: 500; }

.taskbar { display: flex; height: 40px; color: #fff; background: linear-gradient(90deg, #223842 0%, #223842 35%, #1a2942 75%); }
.sysgroup { display: flex; padding-right: 2px; }
.sysgroup button { width: 48px; }
.task { width: 49px; position: relative; }
.multi::after, .current::after { content: ""; position: absolute; left: 4px; right: 4px; bottom: 0; height: 2px; background: linear-gradient(90deg, #76b9ed 80%, #4b7ea8 80%); }
.current { background: linear-gradient(#4e6067, #4e6067) center / 46px 100% no-repeat; }
.current::after { left: 1px; right: 1px; background: #76b9ed; }
.tray { display: flex; margin-left: auto; padding-right: 4px; }
.tray svg { fill: none; stroke: #fff; }
.weather { width: 32px; margin-right: 16px; }
.weather svg { stroke: none; }
.t24 { width: 24px; }
.ink { position: relative; width: 32px; background: #2f3c54; display: flex; justify-content: center; }
.tip { position: absolute; right: -55px; bottom: 40px; height: 20px; padding: 0 7px; border: 1px solid #767676; background: #989898; color: #404040; font-size: 11px; line-height: 18px; white-space: nowrap; box-shadow: 2px 2px 3px #0008; }
.lang { width: 37px; font-size: 12px; }
.clock { flex-direction: column; width: 70px; font-size: 11px; line-height: 18px; }
.notif { position: relative; width: 48px; padding-right: 8px; border-right: 1px solid #6d7a8c; }
.count { position: absolute; left: 19px; top: 19px; width: 16px; height: 16px; border: 1px solid #aaa; border-radius: 50%; background: #2b323c; font-size: 11px; line-height: 14px; text-align: center; }
</style>
